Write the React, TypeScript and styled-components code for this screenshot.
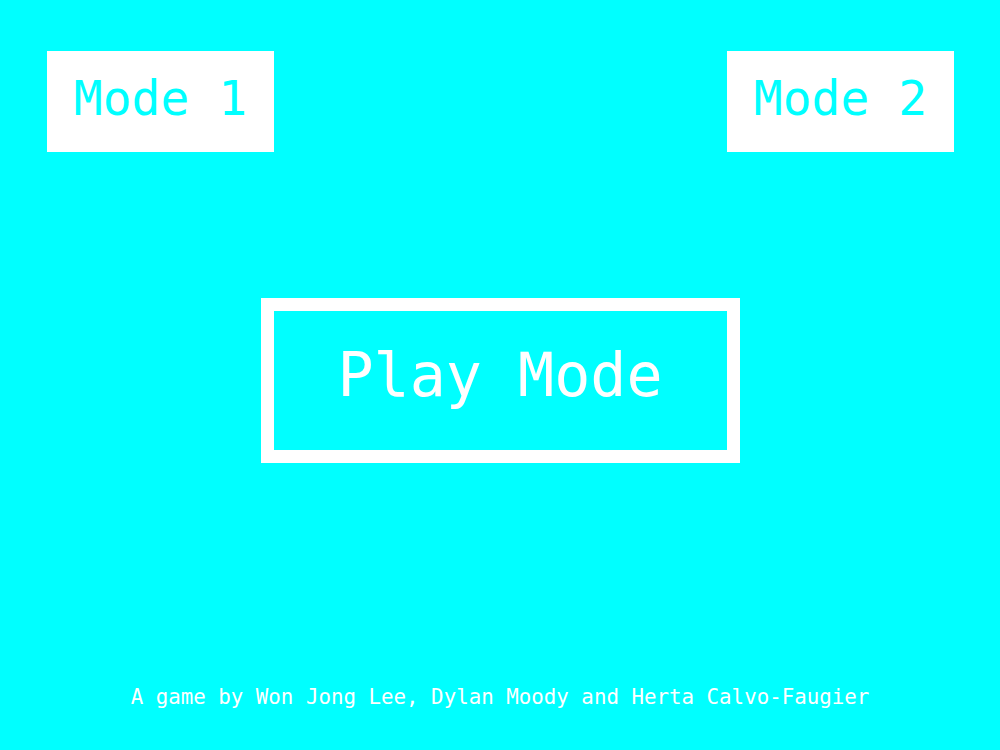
import React from "react";
import styled, { createGlobalStyle } from "styled-components";

const GlobalStyle = createGlobalStyle`
  html, body {
    margin: 0;
    padding: 0;
    background: #00ffff;
  }
  body {
    font-family: "DejaVu Sans Mono", monospace;
  }
`;

const Screen = styled.div`
  width: 1000px;
  height: 750px;
  background: #00ffff;
  display: flex;
  flex-direction: column;
  align-items: center;
  overflow: hidden;
`;

const TopBar = styled.div`
  width: 100%;
  box-sizing: border-box;
  display: flex;
  justify-content: space-between;
  padding: 51px 46px 0 47px;
`;

const ModeButton = styled.button`
  width: 227px;
  height: 101px;
  box-sizing: border-box;
  border: none;
  background: #ffffff;
  color: #00ffff;
  font-family: "DejaVu Sans Mono", monospace;
  font-size: 48px;
  display: flex;
  align-items: center;
  justify-content: center;
  padding: 0 0 8px;
  cursor: pointer;
`;

const PlayButton = styled.button`
  margin-top: 146px;
  width: 479px;
  height: 165px;
  box-sizing: border-box;
  border: 13px solid #ffffff;
  background: transparent;
  color: #ffffff;
  font-family: "DejaVu Sans Mono", monospace;
  font-size: 60px;
  display: flex;
  align-items: center;
  justify-content: center;
  padding: 0 0 11px;
  cursor: pointer;
`;

const Credits = styled.p`
  margin: auto 0 40px;
  color: #ffffff;
  font-family: "DejaVu Sans Mono", monospace;
  font-size: 20.8px;
  line-height: 25px;
`;

export default function App() {
  return (
    <>
      <GlobalStyle />
      <Screen>
        <TopBar>
          <ModeButton>Mode 1</ModeButton>
          <ModeButton>Mode 2</ModeButton>
        </TopBar>
        <PlayButton>Play Mode</PlayButton>
        <Credits>A game by Won Jong Lee, Dylan Moody and Herta Calvo-Faugier</Credits>
      </Screen>
    </>
  );
}
